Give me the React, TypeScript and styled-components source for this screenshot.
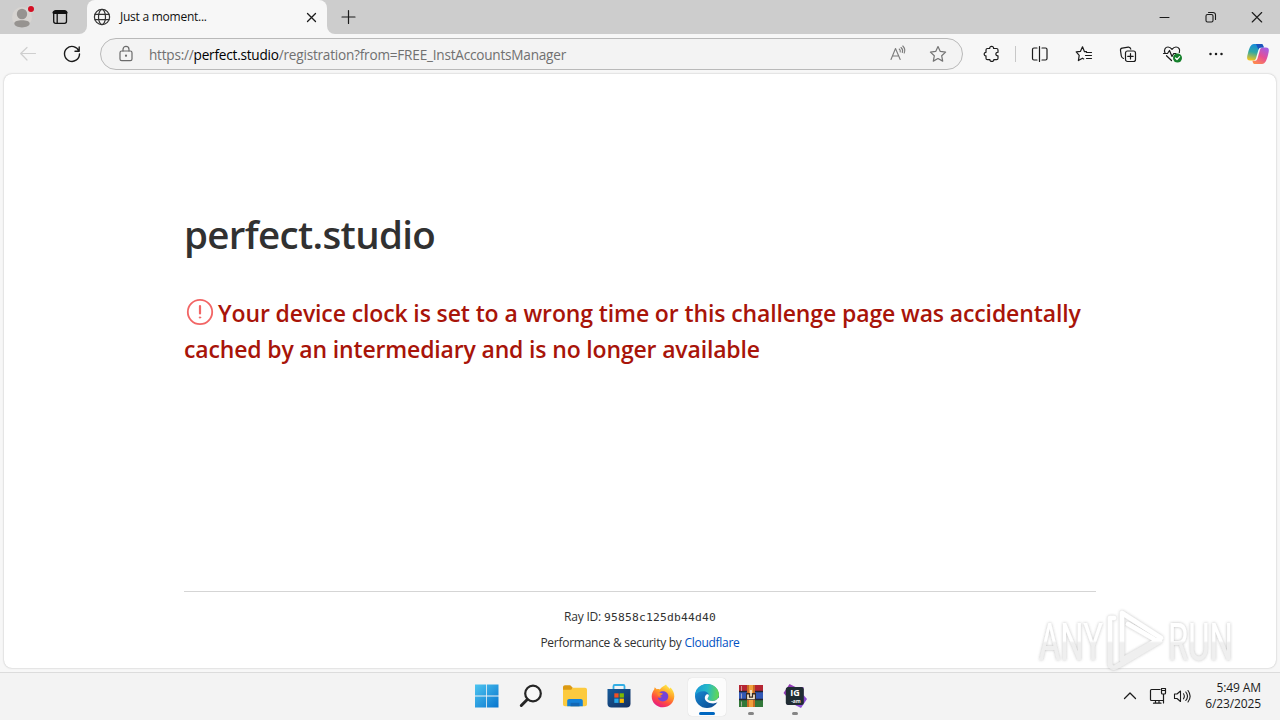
import type { ReactNode } from "react";
import styled, { createGlobalStyle } from "styled-components";

const GlobalStyle = createGlobalStyle`
  * {
    box-sizing: border-box;
  }

  body {
    margin: 0;
    overflow: hidden;
    font-family: "Open Sans", "Noto Sans", sans-serif;
  }

  svg {
    display: block;
    flex-shrink: 0;
  }
`;

const Desktop = styled.div`
  position: relative;
  width: 1280px;
  height: 720px;
  display: flex;
  flex-direction: column;
  background-color: #f7f7f7;
`;

const TabStrip = styled.header`
  height: 34px;
  display: flex;
  align-items: center;
  background-color: #cdcdcd;
`;

const StripLeft = styled.div`
  width: 87px;
  height: 34px;
  display: flex;
  align-items: center;
  gap: 18px;
  padding-left: 12px;
  background-color: #cdcdcd;
  border-bottom-right-radius: 8px;
`;

const TabBacking = styled.div`
  display: flex;
  height: 34px;
  background: linear-gradient(#cdcdcd 50%, #f7f7f7 50%);
`;

const Tab = styled.div`
  width: 240px;
  height: 34px;
  display: flex;
  align-items: center;
  padding: 0 8px 0 6px;
  background-color: #f7f7f7;
  border-radius: 8px 8px 0 0;
`;

const TabTitle = styled.span`
  flex: 1;
  margin: -1px 0 0 9px;
  font-size: 12px;
  letter-spacing: -0.25px;
  color: #111;
`;

const StripRight = styled.div`
  width: 100px;
  height: 34px;
  display: flex;
  align-items: center;
  padding-left: 13px;
  background-color: #cdcdcd;
  border-bottom-left-radius: 8px;
`;

const WindowButtons = styled.div`
  display: flex;
  margin-left: auto;
`;

const Cell = styled.div<{ $width: number; $height?: number }>`
  width: ${(props) => props.$width}px;
  height: ${(props) => props.$height ?? 32}px;
  display: flex;
  align-items: center;
  justify-content: center;
  flex-shrink: 0;
`;

const Toolbar = styled.div`
  height: 40px;
  display: flex;
  align-items: center;
  padding: 0 0 0 6px;
`;

const AddressBar = styled.div`
  width: 863px;
  height: 32px;
  margin: 0 7px 0 6px;
  padding: 0 4px 0 16px;
  display: flex;
  align-items: center;
  background-color: #f3f3f3;
  border: 1px solid #b9b9b9;
  border-radius: 16px;
`;

const Url = styled.span`
  flex: 1;
  margin-left: 14px;
  font-size: 13.6px;
  letter-spacing: -0.22px;
  color: #707070;

  b {
    font-weight: 400;
    color: #000;
  }
`;

const Separator = styled.div`
  width: 1px;
  height: 16px;
  margin: 0 2px 0 1px;
  background-color: #c8c8c8;
`;

const Page = styled.main`
  width: 1272px;
  height: 594px;
  margin: 0 4px 4px;
  padding: 136px 180px 0;
  display: flex;
  flex-direction: column;
  background-color: #fff;
  border-radius: 8px;
  box-shadow: 0 0 2px rgba(0, 0, 0, 0.28);
`;

const Heading = styled.h1`
  margin: 0;
  height: 60px;
  font-size: 38.5px;
  font-weight: 600;
  line-height: 48px;
  letter-spacing: -0.66px;
  color: #313131;
`;

const Message = styled.h2`
  margin: 25px 0 0;
  height: 72px;
  font-size: 23px;
  font-weight: 600;
  line-height: 36px;
  color: #a81409;
  white-space: nowrap;
`;

const MessageLine = styled.div<{ $spacing: number }>`
  display: flex;
  align-items: center;
  height: 36px;
  letter-spacing: ${(props) => props.$spacing}px;
`;

const Footer = styled.footer`
  margin-top: 224px;
  padding-top: 16px;
  border-top: 1px solid #d5d5d5;
  text-align: center;
  font-size: 12px;
  color: #313131;
`;

const FooterLine = styled.div<{ $spacing: number }>`
  height: 18px;
  margin-bottom: 8px;
  line-height: 18px;
  letter-spacing: ${(props) => props.$spacing}px;

  code {
    font-family: "DejaVu Sans Mono", monospace;
    font-size: 11.3px;
    letter-spacing: 0.2px;
  }

  a {
    color: #0051c3;
  }
`;

const Taskbar = styled.div`
  height: 48px;
  display: grid;
  grid-template-columns: 1fr 352px 1fr;
  background-color: #f3f3f3;
  border-top: 1px solid #dcdcdc;
`;

const Apps = styled.div`
  grid-column: 2;
  display: flex;
  align-items: center;
`;

const AppSlot = styled.div`
  width: 44px;
  height: 46px;
  display: flex;
  justify-content: center;
  flex-shrink: 0;
`;

const AppButton = styled.div<{ $active?: boolean }>`
  width: 38px;
  height: 38px;
  margin: 4px 0 0 1px;
  padding-top: 5px;
  display: flex;
  flex-direction: column;
  align-items: center;
  border-radius: 4px;
  background-color: ${(props) => (props.$active ? "#fcfcfc" : "transparent")};
  box-shadow: ${(props) => (props.$active ? "0 0 1px rgba(0, 0, 0, 0.2)" : "none")};
`;

const Indicator = styled.div<{ $active?: boolean }>`
  width: ${(props) => (props.$active ? 16 : 6)}px;
  height: 3px;
  margin-top: 3px;
  border-radius: 2px;
  background-color: ${(props) => (props.$active ? "#0067c0" : "#858585")};
`;

const Tray = styled.div`
  display: flex;
  align-items: center;
  justify-content: flex-end;
  padding: 0 19px 2px 0;
`;

const Clock = styled.div`
  width: 67px;
  font-size: 12px;
  line-height: 16px;
  letter-spacing: -0.12px;
  text-align: right;
  color: #1b1b1b;
`;

const Watermark = styled.svg`
  position: absolute;
  left: 1030px;
  top: 600px;
`;

interface LineIconProps {
  size?: number;
  color?: string;
  weight?: number;
  children: ReactNode;
}

const LineIcon = ({ size = 20, color = "#1b1b1b", weight = 1.1, children }: LineIconProps) => (
  <svg
    width={size}
    height={size}
    viewBox={`0 0 ${size} ${size}`}
    fill="none"
    stroke={color}
    strokeWidth={weight}
    strokeLinecap="round"
    strokeLinejoin="round"
  >
    {children}
  </svg>
);

const Profile = () => (
  <svg width="22" height="26" viewBox="0 0 22 26">
    <circle cx="10" cy="13" r="10" fill="#d7d4d1" />
    <circle cx="10" cy="10" r="5.2" fill="#969390" />
    <path d="M2.3 19.5c0-2.2 3.4-3.3 7.7-3.3s7.7 1.1 7.7 3.3S14.3 23.4 10 23.4s-7.7-1.7-7.7-3.9z" fill="#969390" />
    <circle cx="19" cy="5" r="4" fill="#d7d4d1" />
    <circle cx="19" cy="5" r="3" fill="#d40f24" />
  </svg>
);

const Workspaces = () => (
  <LineIcon size={16} color="#111" weight={1.3}>
    <rect x="1.7" y="1.7" width="12.8" height="12.6" rx="2" />
    <path d="M2 3.5h12" strokeWidth="3" />
    <path d="M5.2 4v10" />
  </LineIcon>
);

const Globe = () => (
  <LineIcon size={18} color="#333" weight={1.2}>
    <circle cx="9" cy="9" r="7.6" />
    <ellipse cx="9" cy="9" rx="3.5" ry="7.6" />
    <path d="M2 6.3h14M2 11.7h14" />
  </LineIcon>
);

const Start = () => (
  <svg width="24" height="24" viewBox="0 0 24 24">
    <defs>
      <linearGradient id="win" x1="0" y1="0" x2="1" y2="1">
        <stop offset="0" stopColor="#4dc5f0" />
        <stop offset="1" stopColor="#0874ce" />
      </linearGradient>
    </defs>
    <path d="M0 .5h11.2v11H0zM12 .5h11.5v11H12zM0 12.500h11.2v11H0zM12 12.500h11.5v11H12z" fill="url(#win)" />
  </svg>
);

const Search = () => (
  <svg width="24" height="24" viewBox="0 0 24 24" fill="none">
    <circle cx="14" cy="9.5" r="7.8" fill="#f8f8f8" stroke="#252525" strokeWidth="2.2" />
    <path d="M8.3 15.5l-6 6" stroke="#252525" strokeWidth="3" strokeLinecap="round" />
  </svg>
);

const Explorer = () => (
  <svg width="26" height="24" viewBox="0 0 26 24">
    <path d="M1 3.2C1 2 1.8 1.2 3 1.2h5.2l2.4 2.4V8H1z" fill="#dc9a13" />
    <path d="M1 5.8h8.2l1.6-2.1H23c1.2 0 2 .8 2 2v14.6c0 1.2-.8 2-2 2H3c-1.2 0-2-.8-2-2z" fill="#fcca3e" />
    <path d="M5.2 22.3V17c0-1.1.8-1.9 1.9-1.9h11.8c1.1 0 1.9.8 1.9 1.9v5.3z" fill="#1481d8" />
    <path d="M8.5 18.8h9v3.5h-9z" fill="#1267b4" />
  </svg>
);

const Store = () => (
  <svg width="24" height="24" viewBox="0 0 24 24">
    <path d="M6.5 6V2.2c0-.7.5-1.2 1.2-1.2h8.6c.7 0 1.2.5 1.2 1.2V6" fill="none" stroke="#33aee4" strokeWidth="1.8" />
    <path d="M.5 5h23v14.5a4 4 0 0 1-4 4h-15a4 4 0 0 1-4-4z" fill="url(#storeBag)" />
    <defs>
      <linearGradient id="storeBag" x1="0" y1="0" x2="1" y2="1">
        <stop offset="0" stopColor="#165b9b" />
        <stop offset="1" stopColor="#142e5e" />
      </linearGradient>
    </defs>
    <path d="M7.3 9.3h4.3v4.3H7.3z" fill="#f25022" />
    <path d="M12.6 9.3h4.3v4.3h-4.3z" fill="#7fba00" />
    <path d="M7.3 14.6h4.3v4.3H7.3z" fill="#26a7e8" />
    <path d="M12.6 14.6h4.3v4.3h-4.3z" fill="#ffb900" />
  </svg>
);

const Firefox = () => (
  <svg width="24" height="24" viewBox="0 0 24 24">
    <defs>
      <linearGradient id="fox" x1=".8" y1=".05" x2=".3" y2="1">
        <stop offset="0" stopColor="#fff04a" />
        <stop offset=".4" stopColor="#ff9a25" />
        <stop offset=".7" stopColor="#ff4a43" />
        <stop offset="1" stopColor="#e31987" />
      </linearGradient>
    </defs>
    <path d="M3.2 5.4l.5-2.1 2.1 1.9c1.3-.3 2.2-.2 3 .2C10.5 2.6 13.5 2 15 .5c1 2 2.6 2.4 3.4 4.2l1.1-1.2C22 6.2 23.4 9 23.3 12.6 23 19 18.2 23.3 12 23.3S.7 18.6.7 12.4c0-2.7 1-5.2 2.5-7z" fill="url(#fox)" />
    <path d="M8.3 8.4c3.3-2.7 8.8-.8 9 3.7.1 3.3-2.5 5.4-5.4 5.4-3 0-5-2-5.2-4.2 1.6 1 3.3.5 4.3-.7-1.7-.2-3.6-1.1-2.7-4.2z" fill="#7542d8" />
    <path d="M6.3 8.7c2.3-.8 3.5.3 5.6.8-.4 1.7-2.6 1.4-2.9 2.8-1.5-.1-3-1.3-2.7-3.6z" fill="#ff8b28" />
  </svg>
);

const Edge = () => (
  <svg width="26" height="26" viewBox="0 0 26 26">
    <defs>
      <linearGradient id="edgeTop" x1="0" y1=".4" x2="1" y2=".5">
        <stop offset="0" stopColor="#199bd7" />
        <stop offset=".5" stopColor="#25b9c8" />
        <stop offset="1" stopColor="#67d94f" />
      </linearGradient>
      <linearGradient id="edgeBottom" x1="0" y1="0" x2=".8" y2="1">
        <stop offset="0" stopColor="#1996df" />
        <stop offset="1" stopColor="#0c4a91" />
      </linearGradient>
    </defs>
    <circle cx="13" cy="13" r="12" fill="url(#edgeBottom)" />
    <path d="M1 13C1 6.3 6.4 1 13 1s12 4.7 12 10.500c0 4-3.1 6.4-6.7 6.4-2.8 0-4.7-.9-4.7-2.2 0-.9 1.3-1.4 1.3-3.1 0-2.4-2.3-4.3-5.8-4.3C5.5 8.300 2.400 10 1 13z" fill="url(#edgeTop)" />
    <path d="M14.900 12.600c0 1.700-1.300 2.200-1.300 3.100 0 1.300 1.900 2.200 4.700 2.200 3 0 5.200-1.500 6.100-3.400l1.600 2.500-2.300 2.300c-1.300.7-2.900 1.100-4.600 1.100-4.800 0-8.300-2.300-8.300-5.300 0-1.900.9-3.300 2.200-3.900 1.200-.2 1.900.6 1.900 1.400z" fill="#fcfcfc" />
  </svg>
);

const WinRar = () => (
  <svg width="26" height="24" viewBox="0 0 26 24">
    <path d="M1 1h24v7H1z" fill="#b52533" />
    <path d="M1 8h24v7.5H1z" fill="#3158b6" />
    <path d="M1 15.5h24V23H1z" fill="#327839" />
    <path d="M1 7.5h24M1 15.5h24" stroke="#252333" strokeWidth="1.3" />
    <path d="M3.500 2v5M3.500 9.500v5M3.500 17.500v5" stroke="#dac0c0" strokeWidth=".7" />
    <path d="M9 1h8v22H9z" fill="#c96a24" />
    <path d="M11 1h4v22h-4z" fill="#f0a03c" />
    <rect x="8" y="9" width="10" height="7" fill="#392b24" />
    <path d="M10 10.500v4h6v-4M13 6v6.500" fill="none" stroke="#f8ecd2" strokeWidth="1.700" />
  </svg>
);

const IgAm = () => (
  <svg width="26" height="26" viewBox="0 0 26 26">
    <defs>
      <linearGradient id="igam" x1="0" y1="0" x2="1" y2="1">
        <stop offset="0" stopColor="#9638ae" />
        <stop offset="1" stopColor="#8751dc" />
      </linearGradient>
    </defs>
    <path d="M7.5 1l6 3h8v8l3.500 4-6 9-6-3H5v-8L1.500 10z" fill="url(#igam)" />
    <rect x="3.800" y="4" width="18" height="18" rx="2.5" fill="#202c33" />
    <text x="13" y="12.500" fill="#fff" fontFamily="Open Sans" fontWeight="700" fontSize="9" textAnchor="middle">
      IG
    </text>
    <text x="14" y="19.500" fill="#eee" fontFamily="Open Sans" fontWeight="700" fontSize="5" textAnchor="middle">
      -am
    </text>
  </svg>
);

const Copilot = () => (
  <svg width="24" height="24" viewBox="0 0 24 24">
    <defs>
      <linearGradient id="copLeft" x1=".5" y1="0" x2=".3" y2="1">
        <stop offset="0" stopColor="#168bdc" />
        <stop offset=".5" stopColor="#30a8a4" />
        <stop offset="1" stopColor="#f4c51d" />
      </linearGradient>
      <linearGradient id="copRight" x1=".8" y1="0" x2=".2" y2="1">
        <stop offset="0" stopColor="#a05fe6" />
        <stop offset=".5" stopColor="#e64f94" />
        <stop offset="1" stopColor="#ff8b4c" />
      </linearGradient>
    </defs>
    <path d="M15.5 2H8C4.5 2 3.2 6.5 2 11c-1.3 4.6-1.5 7.5 2 7.5h3.5c1.5 0 2.2-1 2.6-2.5l2.4-8.5c.5-1.7 1.3-2.3 2.7-2.3h2.4C17.1 3.5 16.8 2 15.5 2z" fill="url(#copLeft)" />
    <path d="M8.5 22H16c3.5 0 4.8-4.5 6-9 1.3-4.6 1.5-7.5-2-7.5h-3.5c-1.5 0-2.2 1-2.6 2.5l-2.4 8.5c-.5 1.7-1.3 2.3-2.7 2.3H6.4C6.9 20.5 7.2 22 8.5 22z" fill="url(#copRight)" />
    <path d="M10 2h5.3c1.6 0 2 1.4 2.5 3.4h-2.3c-1.7 0-2.5.8-3 2.4z" fill="#1d54bd" />
  </svg>
);

const AnyRun = () => (
  <Watermark width="220" height="80" viewBox="0 0 220 80">
    <defs>
      <filter id="halo" x="-10%" y="-10%" width="120%" height="120%">
        <feDropShadow dx="0" dy="0" stdDeviation="1.8" floodColor="#666" floodOpacity=".55" />
      </filter>
      <linearGradient id="markFill" x1="0" y1="22" x2="0" y2="60" gradientUnits="userSpaceOnUse">
        <stop offset=".5" stopColor="#fff" />
        <stop offset=".55" stopColor="#ececec" />
      </linearGradient>
    </defs>
    <g filter="url(#halo)" fill="url(#markFill)" fontFamily="Roboto" fontSize="52" opacity=".8">
      <text transform="translate(9 0) scale(.63 1)" y="60">
        ANY
      </text>
      <text transform="translate(138 0) scale(.63 1)" y="60">
        RUN
      </text>
      <g fill="none" stroke="url(#markFill)" strokeWidth="4.5" strokeLinejoin="round" strokeLinecap="round">
        <path d="M92 13v47l39-22z" />
        <path d="M84 18h-4v45c0 4 3 6 6 4l44-26" />
        <path d="M98 24l26 15" />
      </g>
    </g>
  </Watermark>
);

const App = () => {
  return (
    <Desktop>
      <GlobalStyle />
      <TabStrip>
        <TabBacking>
          <StripLeft>
            <Profile />
            <Workspaces />
          </StripLeft>
          <Tab>
            <Globe />
            <TabTitle>Just a moment...</TabTitle>
            <LineIcon size={16} weight={1.3}>
              <path d="M4.5 4.5l8 8M12.5 4.5l-8 8" />
            </LineIcon>
          </Tab>
          <StripRight>
            <LineIcon size={16} weight={1.2}>
              <path d="M8.5 1.5v13M2 8h13" />
            </LineIcon>
          </StripRight>
        </TabBacking>
        <WindowButtons>
          <Cell $width={46}>
            <LineIcon size={12} weight={1}>
              <path d="M1 6.5h9" />
            </LineIcon>
          </Cell>
          <Cell $width={46}>
            <LineIcon size={12} weight={1.1}>
              <rect x="1" y="3.5" width="7" height="7.5" rx="1.5" />
              <path d="M3.5 1.5H8A2.500 2.500 0 0 1 10.500 4v4.500" />
            </LineIcon>
          </Cell>
          <Cell $width={46}>
            <LineIcon size={12}>
              <path d="M1.2 1.5l9.5 9.5M10.7 1.5L1.2 11" />
            </LineIcon>
          </Cell>
        </WindowButtons>
      </TabStrip>

      <Toolbar>
        <Cell $width={44}>
          <LineIcon color="#cfcfcf" weight={1.2}>
            <path d="M17.5 9.5H3M9 3.5l-6.3 6L9 16" />
          </LineIcon>
        </Cell>
        <Cell $width={44}>
          <LineIcon weight={1.4}>
            <path d="M17 7.2A7.5 7.5 0 1 0 17.5 10M17.2 3v4.3H13" />
          </LineIcon>
        </Cell>
        <AddressBar>
          <LineIcon size={18} color="#6b6b6b" weight={1.2}>
            <rect x="3" y="6" width="12" height="9.7" rx="1.7" />
            <path d="M6 6V4.4a3 3 0 0 1 6 0V6" />
            <circle cx="9" cy="10.7" r=".5" fill="#6b6b6b" />
          </LineIcon>
          <Url>
            https://<b>perfect.studio</b>/registration?from=FREE_InstAccountsManager
          </Url>
          <Cell $width={40}>
            <LineIcon color="#7b7b7b">
              <path d="M3 15.500L7.500 4.500l4.700 11M4.700 12H10.700M11.200 5c1 .8 1.300 1.900 1 3M13 3.500c1.500 1.300 2 3.300 1.300 5M14.800 2c2 2 2.300 4.900 1.400 7" />
            </LineIcon>
          </Cell>
          <Cell $width={40}>
            <LineIcon color="#747474" weight={1.2}>
              <path d="M10 2.5l2.3 4.9 5.3.7-3.9 3.7 1 5.3-4.7-2.600-4.700 2.600 1-5.300-3.900-3.700 5.300-.7z" />
            </LineIcon>
          </Cell>
        </AddressBar>
        <Cell $width={44}>
          <LineIcon weight={1.2}>
            <path d="M5.5 4.5h2.2c-.4-2.800 4.300-2.800 3.900 0h2.900c.9 0 1.500.6 1.500 1.500v2.300c-2.700-.4-3 3.700 0 3.500v2.400c0 .9-.6 1.500-1.500 1.500h-2.700c.2 2.300-4.100 2.300-3.900 0H5.500c-.9 0-1.500-.6-1.500-1.500v-2.400c-2.400.2-2.400-3.700 0-3.500V6c0-.9.6-1.500 1.500-1.500z" />
          </LineIcon>
        </Cell>
        <Separator />
        <Cell $width={44}>
          <LineIcon weight={1.2}>
            <path d="M7 4H4c-1 0-1.500.5-1.500 1.500v9c0 1 .5 1.500 1.500 1.500h3M12 4h3.500c1 0 1.500.5 1.500 1.500v9c0 1-.5 1.500-1.500 1.500H12M9.500 2.500v15" />
          </LineIcon>
        </Cell>
        <Cell $width={44}>
          <LineIcon weight={1.2}>
            <path d="M12.500 7.700h-2l-2-4.900-2.100 4.600-4.200.5 3 3.500-.8 5.200 4.100-2.400 1.200.7M12.500 8.500h5M11.500 11.500h6M12.500 14.500h5" />
          </LineIcon>
        </Cell>
        <Cell $width={44}>
          <LineIcon weight={1.2}>
            <path d="M5.500 14.500C4 14 3.500 13 3.300 12l-.8-5.500c-.2-1.300.4-2.200 1.700-2.400l6-1c1.500-.2 2.300.5 2.600 2" />
            <rect x="7.500" y="7" width="10" height="10.500" rx="2" />
            <path d="M12.500 9.500V15M9.700 12.300h5.500" />
          </LineIcon>
        </Cell>
        <Cell $width={44}>
          <LineIcon weight={1.2}>
            <path d="M3 9C1.500 5.500 3.500 3 6 3c1.700 0 3 1 4 2.400C11 4 12.300 3 14 3c2.700 0 4.500 2.600 3.300 5.500M1.500 9.500h4l2-3 2.500 6 1.700-3H14M4.500 11.700l5 4.800" />
            <circle cx="15.500" cy="14" r="4.500" fill="#16802c" stroke="none" />
            <path d="M13.500 14l1.500 1.500 2.600-2.800" stroke="#fff" />
          </LineIcon>
        </Cell>
        <Cell $width={44}>
          <svg width="20" height="20" viewBox="0 0 20 20" fill="#1b1b1b">
            <circle cx="4.500" cy="10" r="1.250" />
            <circle cx="10" cy="10" r="1.250" />
            <circle cx="15.500" cy="10" r="1.250" />
          </svg>
        </Cell>
        <Cell $width={40}>
          <Copilot />
        </Cell>
      </Toolbar>

      <Page>
        <Heading>perfect.studio</Heading>
        <Message>
          <MessageLine $spacing={-0.12}>
            <LineIcon size={34} color="#f26565" weight={1.8}>
              <circle cx="16" cy="16" r="12.2" />
              <path d="M16 10v7.500" strokeWidth="2.2" />
              <circle cx="16" cy="21.500" r=".7" fill="#f26565" strokeWidth="1" />
            </LineIcon>
            Your device clock is set to a wrong time or this challenge page was accidentally
          </MessageLine>
          <MessageLine $spacing={-0.16}>cached by an intermediary and is no longer available</MessageLine>
        </Message>
        <Footer>
          <FooterLine $spacing={-0.2}>
            Ray ID: <code>95858c125db44d40</code>
          </FooterLine>
          <FooterLine $spacing={-0.27}>
            Performance &amp; security by <a>Cloudflare</a>
          </FooterLine>
        </Footer>
      </Page>

      <Taskbar>
        <Apps>
          {[Start, Search, Explorer, Store, Firefox, Edge, WinRar, IgAm].map((Icon, index) => (
            <AppSlot key={index}>
              <AppButton $active={Icon === Edge}>
                <Cell $width={26} $height={26}>
                  <Icon />
                </Cell>
                {index > 4 && <Indicator $active={Icon === Edge} />}
              </AppButton>
            </AppSlot>
          ))}
        </Apps>
        <Tray>
          <Cell $width={32}>
            <LineIcon size={16} weight={1.3}>
              <path d="M2.500 10.500L8 5l5.500 5.500" />
            </LineIcon>
          </Cell>
          <Cell $width={24}>
            <LineIcon size={18} weight={1.2}>
              <path d="M11 2.500H2.500c-.6 0-1 .4-1 1v9c0 .6.400 1 1 1h12V8M6.500 13.500V16M10 13.500V16M4.500 16.200h7.500M12.500 1.500h4V6c0 .7-.4 1-1 1h-2c-.6 0-1-.3-1-1zM12.500 3.500h4M14.500 7v9" />
            </LineIcon>
          </Cell>
          <Cell $width={24}>
            <LineIcon size={18} weight={1.1}>
              <path d="M1.500 7v4.500H4L7.500 14.500V4L4 7zM10.500 6.800c1 1.500 1 3.500 0 5M12.800 5c2 2.500 2 6 0 8.500M15 3.500c2.600 3.500 2.600 8 0 11.500" />
            </LineIcon>
          </Cell>
          <Clock>
            5:49 AM
            <br />
            6/23/2025
          </Clock>
        </Tray>
      </Taskbar>
      <AnyRun />
    </Desktop>
  );
};

export default App;
